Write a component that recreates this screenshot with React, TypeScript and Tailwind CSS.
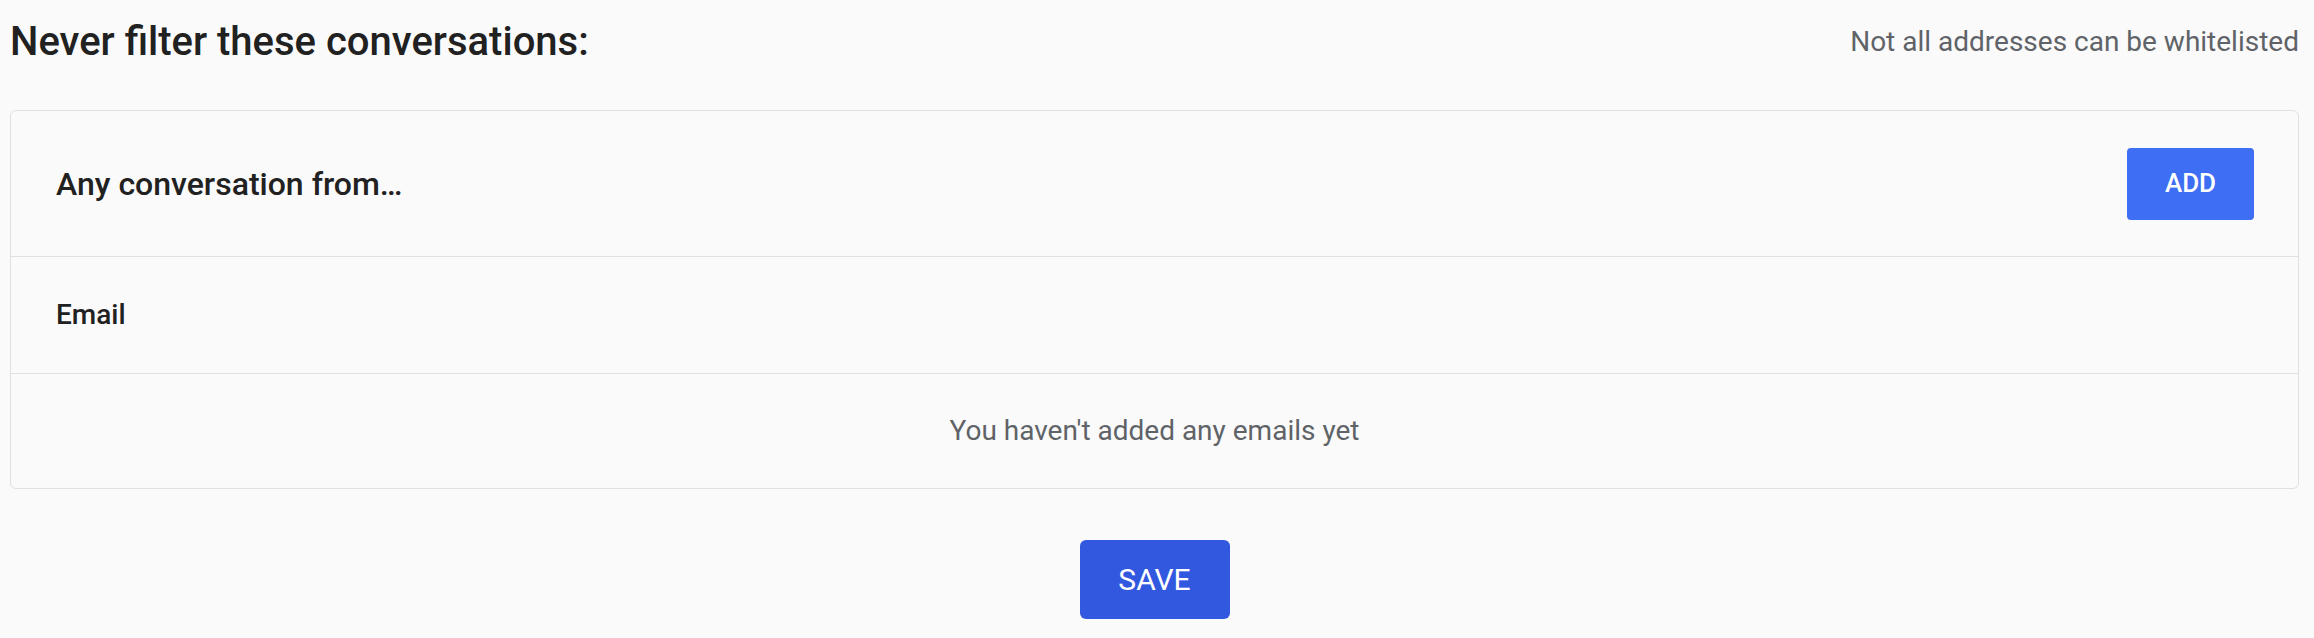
export default function App() {
  return (
    <div className="min-h-screen bg-[#fafafa] pl-[10px] pr-[15px] font-['Roboto',sans-serif]">
      <div className="flex items-center justify-between pt-[18px]">
        <h1 className="text-[40px] leading-[48px] font-medium text-[#212121]">
          Never filter these conversations:
        </h1>
        <span className="text-[28px] leading-[48px] text-[#5f6368]">
          Not all addresses can be whitelisted
        </span>
      </div>

      <div className="mt-[44px] rounded-md border border-[#e0e0e0]">
        <div className="flex h-[146px] items-center justify-between border-b border-[#e0e0e0] pl-[45px] pr-[44px]">
          <span className="text-[32px] font-medium text-[#212121]">Any conversation from…</span>
          <button className="h-[72px] w-[127px] rounded-[4px] bg-[#3d6ef3] text-[26px] font-medium text-white">
            ADD
          </button>
        </div>
        <div className="flex h-[117px] items-center border-b border-[#e0e0e0] pl-[45px]">
          <span className="text-[28px] font-medium text-[#212121]">Email</span>
        </div>
        <div className="flex h-[114px] items-center justify-center">
          <span className="text-[28px] text-[#5f6368]">You haven't added any emails yet</span>
        </div>
      </div>

      <div className="mt-[51px] flex justify-center">
        <button className="h-[79px] w-[150px] rounded-[6px] bg-[#3358e0] text-[30px] text-white">
          SAVE
        </button>
      </div>
    </div>
  )
}
